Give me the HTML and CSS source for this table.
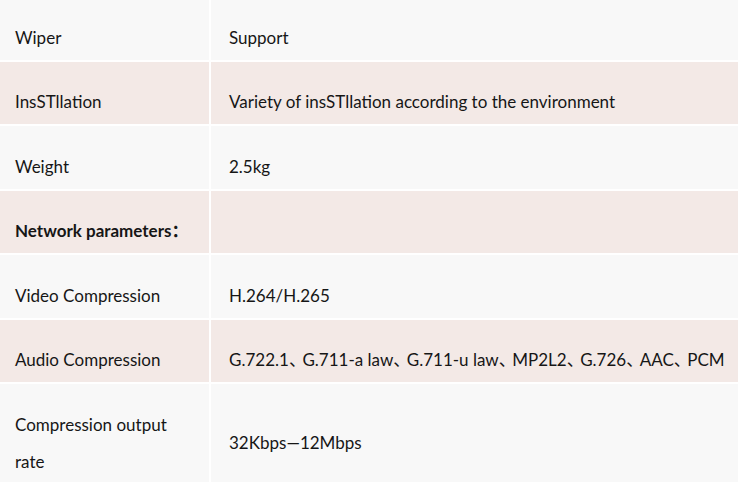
FILE: index.html
```html
<!DOCTYPE html>
<html>
<head>
<meta charset="utf-8">
<link rel="stylesheet" href="styles.css">
</head>
<body>
<div class="spec">
  <div class="cell key grey">Wiper</div>
  <div class="cell val grey">Support</div>
  <div class="cell key pink">InsSTllation</div>
  <div class="cell val pink">Variety of insSTllation according to the environment</div>
  <div class="cell key grey">Weight</div>
  <div class="cell val grey">2.5kg</div>
  <div class="cell key pink bold">Network parameters：</div>
  <div class="cell val pink"></div>
  <div class="cell key grey">Video Compression</div>
  <div class="cell val grey">H.264/H.265</div>
  <div class="cell key pink">Audio Compression</div>
  <div class="cell val pink"><span>G.722.1<span class="sep">、</span>G.711-a law<span class="sep">、</span>G.711-u law<span class="sep">、</span>MP2L2<span class="sep">、</span>G.726<span class="sep">、</span>AAC<span class="sep">、</span>PCM</span></div>
  <div class="cell key grey">Compression output<br>rate</div>
  <div class="cell val grey">32Kbps—12Mbps</div>
</div>
</body>
</html>
```
FILE: styles.css
```css
html, body {
  margin: 0;
  padding: 0;
  background: #ffffff;
}
body {
  font-family: Lato, "Noto Sans CJK SC", sans-serif;
  font-size: 17px;
  color: #161616;
  overflow: hidden;
}
.spec {
  display: grid;
  grid-template-columns: 209px 1fr;
  column-gap: 2px;
  row-gap: 2px;
  margin-top: -3px;
  background: #ffffff;
}
.cell {
  display: flex;
  flex-direction: column;
  justify-content: center;
  line-height: 37px;
  padding-top: 21.5px;
  padding-bottom: 4px;
  white-space: nowrap;
}
.cell.key {
  padding-left: 15px;
  display: block;
  align-self: stretch;
}
.cell.val {
  padding-left: 18px;
}
.sep {
  letter-spacing: -3.5px;
}
.grey { background: #f8f8f8; }
.pink { background: #f3e9e6; }
.bold { font-weight: 700; }
```
